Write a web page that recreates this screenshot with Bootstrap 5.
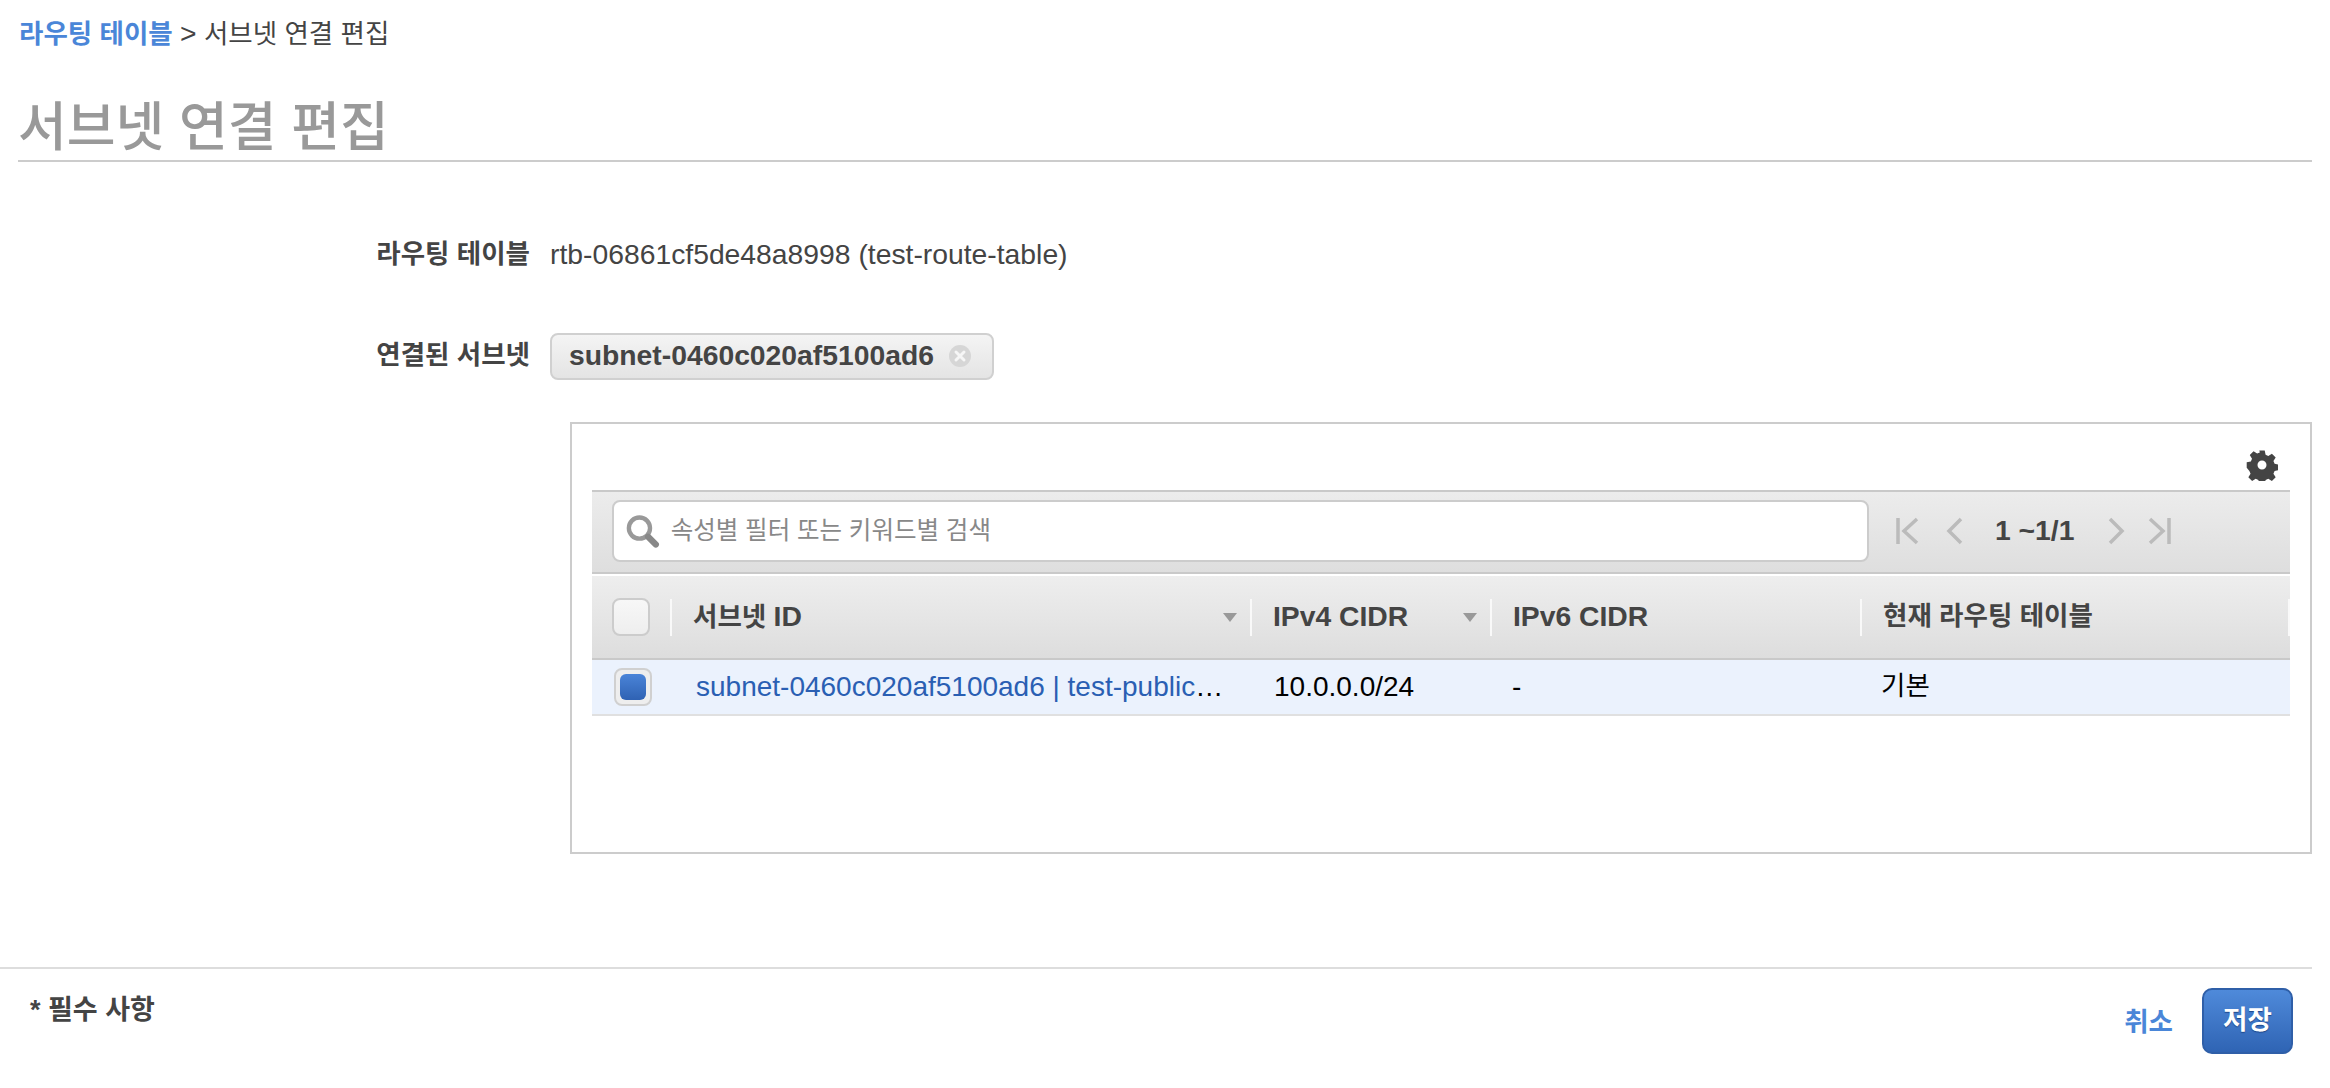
<!doctype html>
<html lang="ko">
<head>
<meta charset="utf-8">
<title>서브넷 연결 편집</title>
<link rel="stylesheet" href="https://cdn.jsdelivr.net/npm/bootstrap@5.3.0/dist/css/bootstrap.min.css">
<style>
html,body{background:#fff}
body{font-family:"Liberation Sans","Noto Sans CJK KR",sans-serif;font-size:26.5px;line-height:1.2;color:#444;overflow:hidden}
.latin-text{font-size:28.3px}
.crumbs{padding:18px 0 0 19px;height:59px;line-height:30px}
.crumbs a{color:#4a86d8;font-weight:700;text-decoration:none}
.page-title{margin:0 18px;height:103px;border-bottom:2px solid #ccc;font-size:53px;line-height:60px;font-weight:500;color:#999;padding-top:39px}
.field-row{display:flex;align-items:center}
.field-label{width:530px;text-align:right;font-weight:700;flex:none}
.field-value{margin-left:20px}
.first-row{margin-top:76px;height:34px}
.second-row{margin-top:60px;height:48px}
.subnet-chip{margin-left:20px;width:444px;height:47px;border:2px solid #d0d0d0;border-radius:8px;background:linear-gradient(#f4f4f4,#e4e4e4);font-weight:700;padding-left:17px;gap:14px}
.grid-panel{margin:42px 18px 0 570px;height:432px;border:2px solid #ccc;padding:0 20px}
.gear-bar{height:66px;padding:0 12px 9px 0}
.tool-bar{height:84px;border-top:2px solid #c9c9c9;border-bottom:2px solid #c9c9c9;background:linear-gradient(#ececec,#dedede);padding:8px 0 0 20px}
.search-box{width:1257px;height:62px;background:#fff;border:2px solid #ccc;border-radius:8px;padding-left:11px;gap:11px}
.search-box input{border:0;padding:0;background:transparent;font-size:24.5px;color:#444;height:100%;box-shadow:none}
.search-box input::placeholder{color:#888}
.pager{margin-left:27px;color:#444;font-weight:700;height:62px}
.pager svg{flex:none}
.prev-arrow{margin-left:26px}
.last-arrow{margin-left:22px}
.page-text{width:80px;white-space:nowrap;margin:0 32px 0 31px}
.subnet-grid{table-layout:fixed;width:1698px;margin-top:2px;border-collapse:separate;border-spacing:0}
.subnet-grid th{padding:0;height:84px;background:linear-gradient(#eee,#dddddd);border-bottom:2px solid #c9c9c9;font-weight:700}
.head-cell{height:37px;border-right:2px solid #f9f9f9;padding-left:21px;padding-right:13px;white-space:nowrap}
.check-cell{padding-left:20px;padding-right:0}
.head-check{width:38px;height:38px;border:2px solid #ccc;border-radius:8px;background:linear-gradient(#f7f7f7,#eee)}
.subnet-grid td{padding:0 0 0 22px;height:56px;background:#ebf2fd;border-bottom:2px solid #e0e0e0;color:#000;white-space:nowrap;font-size:28px}
.subnet-grid td.tick-td{padding:0 0 0 22px}
.row-check{width:38px;height:38px;border:2px solid #d0d0d0;border-radius:8px;background:#eee;padding:4px}
.row-check span{width:100%;height:100%;border-radius:6px;background:linear-gradient(#4a84d8,#2f62b3)}
.subnet-grid td.name-td{padding-left:24px}
.subnet-grid td.dash-td{padding-left:20px}
.subnet-grid td.main-td{padding-left:19px;font-size:26.5px}
.subnet-grid td a{color:#2a5fb3;text-decoration:none}
.foot-bar{margin-top:113px;height:121px;width:2312px;border-top:2px solid #ddd;padding:0 19px 0 30px}
.foot-note{font-weight:700;font-size:27px;margin-top:25px}
.foot-actions{margin-top:19px;gap:29px}
.cancel-link{color:#4a86d8;font-weight:700;text-decoration:none;font-size:26.5px;padding:4px 0 0}
.save-btn{width:91px;height:66px;padding:0;font-size:26.5px;font-weight:700;color:#fff;border:2px solid #2f5fa8;border-radius:10px;background:linear-gradient(#4f8ada,#2f64b4);text-shadow:0 1px 1px #1d4687}
</style>
</head>
<body>
<nav class="crumbs"><a href="#">라우팅 테이블</a> <span class="latin-text">&gt;</span> 서브넷 연결 편집</nav>
<h1 class="page-title">서브넷 연결 편집</h1>

<div class="field-row first-row">
  <div class="field-label">라우팅 테이블</div>
  <div class="field-value latin-text">rtb-06861cf5de48a8998 (test-route-table)</div>
</div>
<div class="field-row second-row">
  <div class="field-label">연결된 서브넷</div>
  <div class="subnet-chip d-flex align-items-center">
    <span class="latin-text">subnet-0460c020af5100ad6</span>
    <svg width="24" height="24" viewBox="0 0 24 24"><circle cx="12" cy="12" r="11" fill="#d6d6d6"/><path d="M8 8l8 8M16 8l-8 8" stroke="#f6f6f6" stroke-width="3" stroke-linecap="round"/></svg>
  </div>
</div>

<section class="grid-panel">
  <div class="gear-bar d-flex align-items-end justify-content-end">
    <svg width="32" height="32" viewBox="0 0 32 32"><path fill="#444" fill-rule="evenodd" d="M13 0h6l1 4.600 3 1.300 4-2.500 4.200 4.200-2.500 4 1.300 3 4.600 1v6l-4.600 1-1.300 3 2.500 4-4.200 4.200-4-2.500-3 1.300-1 4.600h-6l-1-4.600-3-1.300-4 2.500-4.200-4.200 2.500-4-1.300-3L-1 19v-6l4.600-1 1.300-3-2.500-4L6.600 .8l4 2.500 3-1.300z M16 11a5 5 0 1 0 0 10a5 5 0 1 0 0-10z" transform="translate(1.600 1.600) scale(.9)"/></svg>
  </div>
  <div class="tool-bar d-flex">
    <div class="search-box d-flex align-items-center">
      <svg width="36" height="36" viewBox="0 0 36 36" fill="none"><circle cx="15" cy="15" r="11" stroke="#999" stroke-width="4.500"/><path d="M24 24l8 8" stroke="#888" stroke-width="6.500" stroke-linecap="round"/></svg>
      <input class="form-control" type="text" placeholder="속성별 필터 또는 키워드별 검색">
    </div>
    <div class="pager d-flex align-items-center">
      <svg width="24" height="28" viewBox="0 0 24 28" fill="none" stroke="#bbb" stroke-width="3.500"><path d="M2 1v26M21 2L8 14l13 12"/></svg>
      <svg class="prev-arrow" width="18" height="28" viewBox="0 0 18 28" fill="none" stroke="#bbb" stroke-width="3.500"><path d="M15 2L3 14l12 12"/></svg>
      <span class="page-text latin-text">1 ~1/1</span>
      <svg width="18" height="28" viewBox="0 0 18 28" fill="none" stroke="#bbb" stroke-width="3.500"><path d="M3 2l12 12L3 26"/></svg>
      <svg class="last-arrow" width="24" height="28" viewBox="0 0 24 28" fill="none" stroke="#bbb" stroke-width="3.500"><path d="M22 1v26M3 2l13 12L3 26"/></svg>
    </div>
  </div>
  <table class="subnet-grid">
    <colgroup><col style="width:80px"><col style="width:580px"><col style="width:240px"><col style="width:370px"><col style="width:428px"></colgroup>
    <thead>
      <tr>
        <th><div class="head-cell check-cell d-flex align-items-center"><span class="head-check"></span></div></th>
        <th><div class="head-cell d-flex align-items-center justify-content-between"><span>서브넷 <span class="latin-text">ID</span></span><svg width="14" height="9" viewBox="0 0 14 9"><path d="M0 0h14L7 9z" fill="#999"/></svg></div></th>
        <th><div class="head-cell d-flex align-items-center justify-content-between"><span class="latin-text">IPv4 CIDR</span><svg width="14" height="9" viewBox="0 0 14 9"><path d="M0 0h14L7 9z" fill="#999"/></svg></div></th>
        <th><div class="head-cell d-flex align-items-center"><span class="latin-text">IPv6 CIDR</span></div></th>
        <th><div class="head-cell d-flex align-items-center"><span>현재 라우팅 테이블</span></div></th>
      </tr>
    </thead>
    <tbody>
      <tr>
        <td class="tick-td"><div class="row-check d-flex"><span></span></div></td>
        <td class="name-td"><a href="#">subnet-0460c020af5100ad6 | test-public</a>…</td>
        <td>10.0.0.0/24</td>
        <td class="dash-td">-</td>
        <td class="main-td">기본</td>
      </tr>
    </tbody>
  </table>
</section>

<footer class="foot-bar d-flex justify-content-between">
  <div class="foot-note">* 필수 사항</div>
  <div class="foot-actions d-flex align-items-center align-self-start">
    <a class="cancel-link" href="#">취소</a>
    <button type="button" class="btn save-btn">저장</button>
  </div>
</footer>
</body>
</html>
